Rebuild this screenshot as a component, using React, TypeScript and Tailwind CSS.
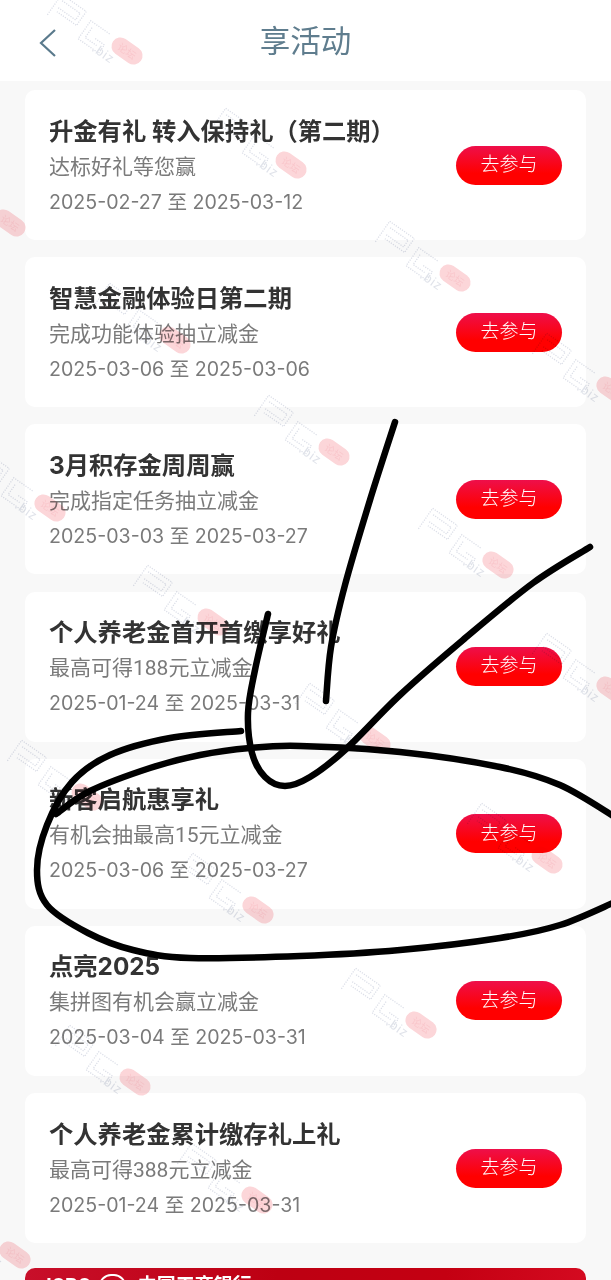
import React from "react";

const items = [
  ["升金有礼 转入保持礼（第二期）", "达标好礼等您赢", "2025-02-27 至 2025-03-12"],
  ["智慧金融体验日第二期", "完成功能体验抽立减金", "2025-03-06 至 2025-03-06"],
  ["3月积存金周周赢", "完成指定任务抽立减金", "2025-03-03 至 2025-03-27"],
  ["个人养老金首开首缴享好礼", "最高可得188元立减金", "2025-01-24 至 2025-03-31"],
  ["新客启航惠享礼", "有机会抽最高15元立减金", "2025-03-06 至 2025-03-27"],
  ["点亮2025", "集拼图有机会赢立减金", "2025-03-04 至 2025-03-31"],
  ["个人养老金累计缴存礼上礼", "最高可得388元立减金", "2025-01-24 至 2025-03-31"],
];

const marks: [number, number][] = [
  [127, 51], [291, 165], [10, 223], [455, 278], [334, 452], [175, 340], [50, 508], [498, 565],
  [213, 622], [612, 390], [375, 740], [87, 797], [547, 860], [258, 910], [421, 1025],
  [135, 1082], [612, 690], [257, 1200], [15, 1255],
];

function smooth(p: number[][]) {
  let d = `M${p[0][0]} ${p[0][1]}`;
  for (let i = 0; i < p.length - 1; i++) {
    const a = p[Math.max(i - 1, 0)], b = p[i], c = p[i + 1], e = p[Math.min(i + 2, p.length - 1)];
    d += ` C${b[0] + (c[0] - a[0]) / 6} ${b[1] + (c[1] - a[1]) / 6} ${c[0] - (e[0] - b[0]) / 6} ${c[1] - (e[1] - b[1]) / 6} ${c[0]} ${c[1]}`;
  }
  return d;
}

const strokes = [
  [[395, 422], [370, 500], [345, 585], [331, 647], [326, 701]],
  [[268, 614], [255, 670], [248, 713], [252, 753], [265, 777], [285, 786], [310, 777], [345, 750], [400, 695], [463, 640], [533, 583], [590, 547]],
  [[241, 731], [170, 738], [110, 755], [72, 782], [47, 825], [37, 870], [47, 905], [88, 933], [133, 950], [190, 958], [300, 956], [400, 950], [500, 938], [560, 925], [615, 902]],
  [[56, 814], [90, 791], [150, 768], [200, 755], [250, 748], [300, 746], [400, 752], [500, 767], [560, 785], [615, 817]],
];

function Watermark({ x, y }: { x: number; y: number }) {
  return (
    <g transform={`translate(${x} ${y})`}>
      <g transform="rotate(35)" fill="none" stroke="#dcdfe8" strokeWidth="1.3" strokeDasharray="1.2 1.3">
        <path d="M-86 16 V-9 H-56 V8 H-80" />
        <path d="M-82 -4 H-60 V4 H-82" />
        <path d="M-24 -4 H-47 V18 H-22 V8 H-34" />
        <path d="M-42 1 V13 H-28" />
      </g>
      <g transform="rotate(35)">
        <rect x="-17" y="-9" width="34" height="18" rx="9" fill="#fcd6d9" />
        <text x="0" y="4" textAnchor="middle" fontSize="10" fill="#f9c6cb" fontFamily="Noto Sans CJK SC, sans-serif">论坛</text>
        <text x="-30" y="20" fontSize="13" letterSpacing="1" fill="#e0e3ea" fontFamily="Liberation Sans, sans-serif">.biz</text>
      </g>
    </g>
  );
}

function Card({ t, s, d }: { t: string; s: string; d: string }) {
  return (
    <div className="h-[150px] shrink-0 rounded-[10px] bg-white px-6 flex items-center justify-between">
      <div className="min-w-0">
        <div className="text-[24.3px] leading-[32px] font-bold text-[#333333] whitespace-nowrap font-['Inter','Noto_Sans_CJK_SC',sans-serif]">{t}</div>
        <div className="mt-1 text-[21px] leading-[32px] text-[#7a7a7a] whitespace-nowrap">{s}</div>
        <div className="mt-[5px] text-[19.6px] leading-[28px] text-[#7a7a7a] whitespace-nowrap font-['Inter','Noto_Sans_CJK_SC',sans-serif]">{d}</div>
      </div>
      <div className="w-[106px] h-[39px] shrink-0 rounded-full bg-[linear-gradient(180deg,#ee0f4a_0%,#ff0000_70%)] text-white text-[19px] font-light flex items-center justify-center">去参与</div>
    </div>
  );
}

export default function App() {
  return (
    <div className="relative w-[611px] h-[1280px] overflow-hidden bg-[#f8f8f8] font-['Roboto','Noto_Sans_CJK_SC',sans-serif]">
      <header className="relative h-[81px] bg-white flex items-center justify-center">
        <svg className="absolute left-[38px] top-[28px] w-[20px] h-[30px]" viewBox="0 0 20 30" fill="none" stroke="#5a7a8c" strokeWidth="2.2">
          <path d="M17 2 L3 15 L17 28" />
        </svg>
        <h1 className="text-[30.5px] font-normal text-[#5f7d8e] mt-[2px]">享活动</h1>
      </header>
      <main className="px-[25px] pt-[9px] flex flex-col gap-[17.2px]">
        {items.map((i) => (
          <Card key={i[0]} t={i[0]} s={i[1]} d={i[2]} />
        ))}
        <div className="mt-[8px] h-[100px] shrink-0 rounded-[10px] bg-[linear-gradient(90deg,#c80f2a_0%,#bd0012_45%,#c40012_75%,#d40a20_100%)] pl-[21px] pt-[6px] flex items-start gap-2 text-white">
          <span className="text-[20px] font-bold leading-[24px]">ICBC</span>
          <span className="w-[27px] h-[24px] rounded-full border-2 border-white text-[11px] leading-[20px] text-center">工</span>
          <span className="ml-[4px] text-[19px] font-bold leading-[24px]">中国工商银行</span>
          <span className="ml-[4px] mt-[3px] text-[13px] leading-[20px] text-[#e59a9a]">95588</span>
        </div>
      </main>
      <svg className="absolute inset-0 w-[611px] h-[1280px] pointer-events-none" viewBox="0 0 611 1280" style={{ mixBlendMode: "multiply" }}>
        {marks.map(([x, y]) => (
          <Watermark key={`${x}-${y}`} x={x} y={y} />
        ))}
        {strokes.map((p, i) => (
          <path key={i} d={smooth(p)} fill="none" stroke="#000" strokeWidth="6.5" strokeLinecap="round" strokeLinejoin="round" />
        ))}
      </svg>
    </div>
  );
}
